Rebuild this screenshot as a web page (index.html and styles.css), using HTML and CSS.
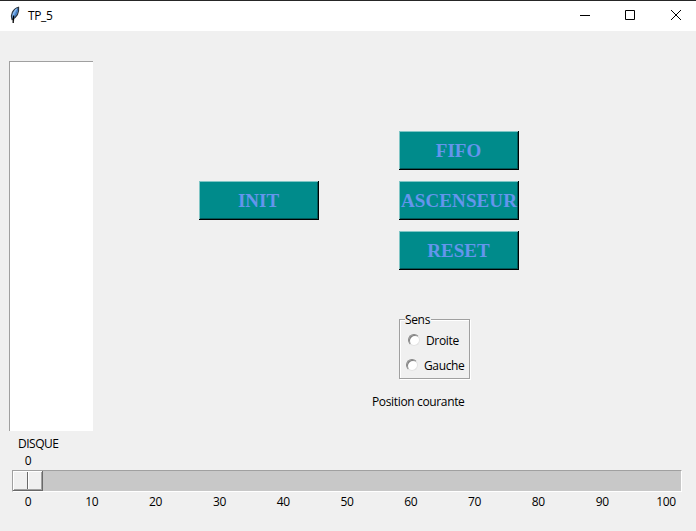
FILE: index.html
```html
<!DOCTYPE html>
<html lang="fr">
<head>
<meta charset="utf-8">
<title>TP_5</title>
<link rel="stylesheet" href="styles.css">
</head>
<body>
<header class="titlebar">
  <svg class="feather" width="16" height="18" viewBox="0 0 16 18">
    <path d="M4 13.5C2.3 9 4.5 3 10.6 1.2C11.2 6 8.8 11 4 13.5Z" fill="#5d98dc" stroke="#2a333d" stroke-width="1.1"/>
    <path d="M5 11C5 8 6.6 4.8 8.8 2.8" fill="none" stroke="#8fbdf0" stroke-width="1.2"/>
    <path d="M9.6 3C9 6.5 7.5 9.5 5.5 12" fill="none" stroke="#3a6fb0" stroke-width="1"/>
    <path d="M5.5 9.5V12M5.5 12V14.5M5.2 13V17" fill="none" stroke="#000" stroke-width="1.3"/>
  </svg>
  <h1 class="title">TP_5</h1>
  <div class="controls">
    <svg width="12" height="12" viewBox="0 0 12 12"><path d="M2 6.5H12" stroke="#000"/></svg>
    <svg width="12" height="12" viewBox="0 0 12 12"><path d="M1.5 1.5H10.5V10.5H1.5Z" fill="none" stroke="#000"/></svg>
    <svg width="12" height="12" viewBox="0 0 12 12"><path d="M1 1L11 11M11 1L1 11" stroke="#000" stroke-width="1"/></svg>
  </div>
</header>
<main class="content">
  <div class="listbox"></div>
  <div class="left-actions"><button class="btn">INIT</button></div>
  <div class="right-actions">
    <button class="btn">FIFO</button>
    <button class="btn btn-wide">ASCENSEUR</button>
    <button class="btn">RESET</button>
    <div class="group">
      <span class="legend">Sens</span>
      <label class="option option-droite"><i class="radio"></i><span>Droite</span></label>
      <label class="option option-gauche"><i class="radio"></i><span>Gauche</span></label>
    </div>
    <p class="position">Position courante</p>
  </div>
</main>
<footer class="scale">
  <div class="scale-title">DISQUE</div>
  <div class="scale-value">0</div>
  <div class="trough"><div class="thumb"><i></i><i></i></div></div>
  <div class="ticks">
    <span>0</span><span>10</span><span>20</span><span>30</span><span>40</span><span>50</span><span>60</span><span>70</span><span>80</span><span>90</span><span>100</span>
  </div>
</footer>
</body>
</html>
```
FILE: styles.css
```css
* { box-sizing: border-box; }
body {
  margin: 0;
  width: 696px;
  height: 531px;
  overflow: hidden;
  background: #f0f0f0;
  color: #000;
  font: 12px/16px "Open Sans", "Noto Sans", sans-serif;
  letter-spacing: -0.35px;
}
.titlebar {
  display: flex;
  align-items: center;
  height: 31px;
  padding: 0 14px 0 8px;
  background: #fff;
  border-top: 1px solid #262626;
}
.feather { margin-bottom: 2px; }
.title { margin: 0 0 0 4px; font-size: 12px; font-weight: 400; letter-spacing: -0.4px; }
.controls { display: flex; gap: 34px; margin-left: auto; margin-bottom: 2px; }
.controls svg { display: block; width: 12px; }
.content { display: flex; height: 400px; padding: 30px 0 0 9px; }
.listbox {
  width: 84px;
  height: 370px;
  background: #fff;
  border-top: 1px solid #a0a0a0;
  border-left: 1px solid #a0a0a0;
}
.left-actions { margin: 120px 0 0 106px; }
.right-actions { margin: 70px 0 0 80px; width: 120px; }
.btn {
  display: block;
  width: 120px;
  height: 39px;
  margin: 0 0 11px;
  padding: 1px 1px 0 0;
  border: 0;
  background: #008b8b;
  box-shadow: inset -1px -1px #000, inset 1px 1px #80c5c5, inset -2px -2px #005858;
  color: #6495ed;
  font: bold 19px/38px "Liberation Serif", serif;
  letter-spacing: 0;
  text-align: center;
  white-space: nowrap;
}
.btn-wide { padding-right: 0; letter-spacing: 0.1px; }
.group {
  position: relative;
  width: 71px;
  height: 60px;
  margin-top: 49px;
  padding-top: 14px;
  border: 1px solid #a0a0a0;
  box-shadow: 1px 1px #fff, inset 1px 1px #fff;
}
.legend {
  position: absolute;
  top: -8px;
  left: 5px;
  padding: 0 1px 0 0;
  background: #f0f0f0;
}
.option { display: flex; height: 25px; line-height: 14px; }
.option-droite { padding-left: 8px; }
.option-gauche { padding-left: 6px; }
.radio {
  width: 12px;
  height: 12px;
  margin-right: 6px;
  border-radius: 50%;
  background: #fff;
  border: 1px solid;
  border-color: #858585 #e3e3e3 #e3e3e3 #858585;
  box-shadow: inset 1px 1px #808080;
}
.position { margin: 15px 0 0 -27px; white-space: nowrap; }
.scale { padding: 5px 14px 0 12px; }
.scale-title { padding-left: 6px; letter-spacing: -0.5px; }
.scale-value { width: 30px; margin-left: 1px; text-align: center; height: 18px; line-height: 18px; }
.trough {
  height: 22px;
  background: #c8c8c8;
  border: 1px solid;
  border-color: #a0a0a0 #fff #fff #a0a0a0;
}
.thumb {
  display: flex;
  width: 30px;
  height: 20px;
  padding-top: 1px;
  background: #f0f0f0;
  box-shadow: inset -1px -1px #696969, inset 1px 1px #fff, inset -2px -2px #a0a0a0;
}
.thumb i { width: 15px; height: 17px; border-right: 1px solid #696969; }
.thumb i + i { width: 13px; border-right: 0; border-left: 1px solid #fff; }
.ticks { display: flex; justify-content: space-between; margin: 2px 1px 0 1px; }
.ticks span { width: 30px; text-align: center; }
```
